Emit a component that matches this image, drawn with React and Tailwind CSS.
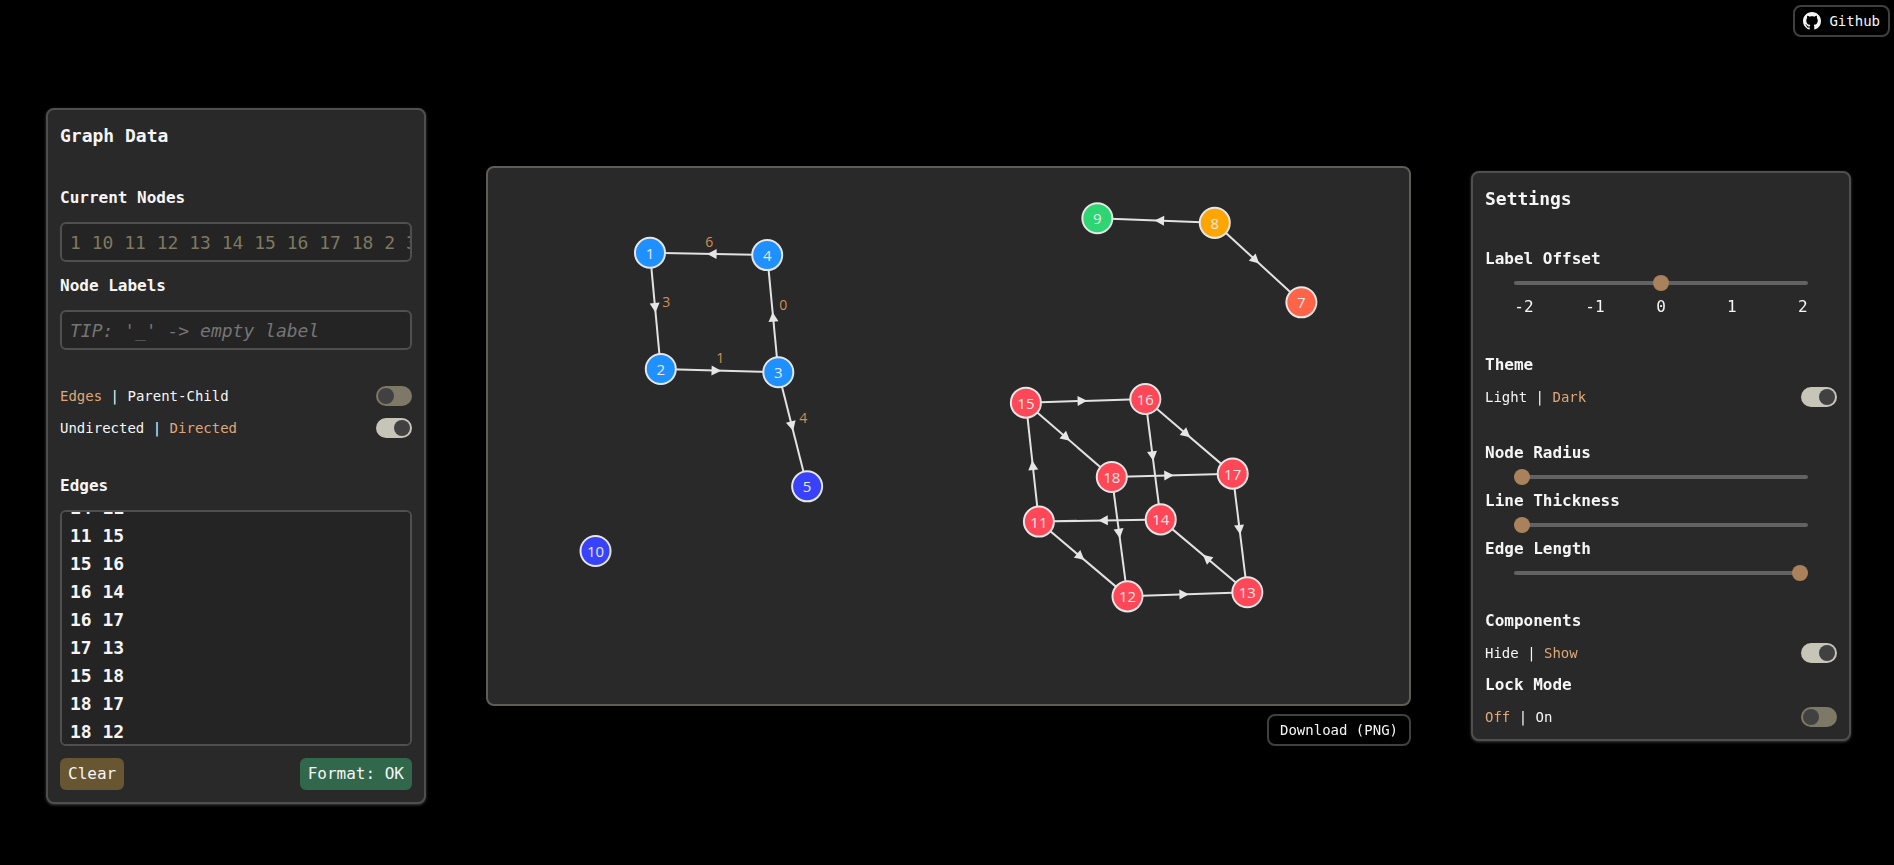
import { useEffect, useRef, useState } from "react";

const NODES = [
  { id: "1", x: 650.8, y: 252.7, fill: "#1e90ff" },
  { id: "4", x: 767.9, y: 255, fill: "#1e90ff" },
  { id: "2", x: 661.6, y: 368.8, fill: "#1e90ff" },
  { id: "3", x: 779, y: 372, fill: "#1e90ff" },
  { id: "5", x: 807.8, y: 486, fill: "#3742fa" },
  { id: "10", x: 596.4, y: 550.6, fill: "#3742fa" },
  { id: "9", x: 1097.7, y: 218.2, fill: "#2ed573" },
  { id: "8", x: 1215, y: 222.8, fill: "#ffa502" },
  { id: "7", x: 1301.5, y: 302.2, fill: "#ff6348" },
  { id: "15", x: 1026.3, y: 402.4, fill: "#ff4757" },
  { id: "16", x: 1145.6, y: 398.8, fill: "#ff4757" },
  { id: "18", x: 1112.1, y: 476.7, fill: "#ff4757" },
  { id: "17", x: 1232.9, y: 473.3, fill: "#ff4757" },
  { id: "11", x: 1039.3, y: 521.2, fill: "#ff4757" },
  { id: "14", x: 1161, y: 519, fill: "#ff4757" },
  { id: "12", x: 1127.8, y: 595.9, fill: "#ff4757" },
  { id: "13", x: 1247.5, y: 591.8, fill: "#ff4757" },
];

const LINKS = [
  { from: "1", to: "2", label: "3", lx: 667, ly: 302 },
  { from: "2", to: "3", label: "1", lx: 721, ly: 358 },
  { from: "3", to: "4", label: "0", lx: 784, ly: 305 },
  { from: "4", to: "1", label: "6", lx: 710, ly: 242 },
  { from: "3", to: "5", label: "4", lx: 804, ly: 418 },
  { from: "8", to: "7" },
  { from: "8", to: "9" },
  { from: "11", to: "12" },
  { from: "12", to: "13" },
  { from: "13", to: "14" },
  { from: "14", to: "11" },
  { from: "11", to: "15" },
  { from: "15", to: "16" },
  { from: "16", to: "14" },
  { from: "16", to: "17" },
  { from: "17", to: "13" },
  { from: "15", to: "18" },
  { from: "18", to: "17" },
  { from: "18", to: "12" },
];

const EDGE_TEXT = [
  "1 2 3", "2 3 1", "3 4 0", "4 1 6", "3 5 4", "8 7", "8 9", "10",
  "11 12", "12 13", "13 14", "14 11", "11 15", "15 16", "16 14",
  "16 17", "17 13", "15 18", "18 17", "18 12",
].join("\n");

const byId = Object.fromEntries(NODES.map((n) => [n.id, n]));

function Graph() {
  return (
    <svg viewBox="489 168 920 536" className="block h-auto w-full" role="img" aria-label="Graph">
      {LINKS.map(({ from, to }) => {
        const a = byId[from];
        const b = byId[to];
        const angle = (Math.atan2(b.y - a.y, b.x - a.x) * 180) / Math.PI;
        return (
          <g key={`${from}-${to}`}>
            <line x1={a.x} y1={a.y} x2={b.x} y2={b.y} stroke="#e2e2e2" strokeWidth="2" />
            <path
              d="M1.5 0 L-8 -5 L-8 5 Z"
              fill="#e6e6e6"
              transform={`translate(${(a.x + b.x) / 2} ${(a.y + b.y) / 2}) rotate(${angle})`}
            />
          </g>
        );
      })}
      {LINKS.filter((l) => l.label).map((l) => (
        <text
          key={`${l.from}-${l.to}-label`}
          x={l.lx}
          y={l.ly + 5}
          textAnchor="middle"
          fill="#cf9052"
          className="font-['Open_Sans',sans-serif] text-[14px]"
        >
          {l.label}
        </text>
      ))}
      {NODES.map((n) => (
        <g key={n.id}>
          <circle cx={n.x} cy={n.y} r="15" fill={n.fill} stroke="#e6e6e6" strokeWidth="2" />
          <text
            x={n.x}
            y={n.y + 6}
            textAnchor="middle"
            fill="#e8e8e8"
            className="font-['Open_Sans',sans-serif] text-[15px] font-medium"
          >
            {n.id}
          </text>
        </g>
      ))}
    </svg>
  );
}

function Panel({ title, children }) {
  return (
    <section className="w-[380px] shrink-0 rounded-lg border-2 border-[#4f4f4f] bg-[#292929] p-3 shadow-[0_1px_3px_#404040]">
      <h2 className="text-lg/7 font-bold">{title}</h2>
      {children}
    </section>
  );
}

function Toggle({ left, right, defaultOn, label }) {
  const [on, setOn] = useState(defaultOn);
  return (
    <label className="flex h-5 items-center justify-between text-sm/5">
      <span className="whitespace-pre">
        <span className={on ? "" : "text-[#dfa778]"}>{left}</span>
        {" | "}
        <span className={on ? "text-[#dfa778]" : ""}>{right}</span>
      </span>
      <input
        type="checkbox"
        role="switch"
        aria-label={label}
        checked={on}
        onChange={(e) => setOn(e.target.checked)}
        className="flex h-5 w-9 cursor-pointer appearance-none items-center rounded-full bg-[#7e7966] px-0.5 before:size-4 before:rounded-full before:bg-[#414141] checked:justify-end checked:bg-[#c7c4b8]"
      />
    </label>
  );
}

function Slider({ id, label, ticks, ...range }) {
  return (
    <div>
      <label htmlFor={id} className="block text-base/6 font-bold">
        {label}
      </label>
      <div className="mx-auto w-10/12">
        <div className="flex h-6 items-center">
          <input
            id={id}
            type="range"
            {...range}
            className="h-4 w-full cursor-pointer appearance-none bg-transparent [&::-webkit-slider-runnable-track]:h-1 [&::-webkit-slider-runnable-track]:rounded-sm [&::-webkit-slider-runnable-track]:bg-[#626262] [&::-webkit-slider-thumb]:-mt-1.5 [&::-webkit-slider-thumb]:size-4 [&::-webkit-slider-thumb]:appearance-none [&::-webkit-slider-thumb]:rounded-full [&::-webkit-slider-thumb]:bg-[#a9825b]"
          />
        </div>
        {ticks && (
          <div className="flex justify-between text-base/6">
            {ticks.map((t) => (
              <span key={t} className="w-[1ch] whitespace-nowrap">{t}</span>
            ))}
          </div>
        )}
      </div>
    </div>
  );
}

const field =
  "block w-full rounded-md border-2 border-[#4f4f4f] bg-[#242424] pl-2 text-lg/7 outline-none";

export default function App() {
  const edges = useRef(null);

  useEffect(() => {
    edges.current.scrollTop = 330;
  }, []);

  return (
    <div className="flex min-h-screen flex-col bg-black font-['DejaVu_Sans_Mono',monospace] text-[#f5f5f5]">
      <header className="flex justify-end px-1 py-[5px]">
        <a
          href="https://github.com"
          className="flex h-8 items-center gap-2 rounded-lg border-2 border-[#404040] px-2 text-sm/5"
        >
          <svg viewBox="0 0 16 16" className="size-[18px]" fill="currentColor" aria-hidden="true">
            <path d="M8 0C3.58 0 0 3.58 0 8c0 3.54 2.29 6.53 5.47 7.59.4.07.55-.17.55-.38 0-.19-.01-.82-.01-1.49-2.01.37-2.53-.49-2.69-.94-.09-.23-.48-.94-.82-1.13-.28-.15-.68-.52-.01-.53.63-.01 1.08.58 1.23.82.72 1.21 1.87.87 2.33.66.07-.52.28-.87.51-1.07-1.78-.2-3.64-.89-3.64-3.95 0-.87.31-1.59.82-2.15-.08-.2-.36-1.02.08-2.12 0 0 .67-.21 2.2.82.64-.18 1.32-.27 2-.27s1.36.09 2 .27c1.53-1.04 2.2-.82 2.2-.82.44 1.1.16 1.92.08 2.12.51.56.82 1.27.82 2.15 0 3.07-1.87 3.75-3.65 3.95.29.25.54.73.54 1.48 0 1.07-.01 1.93-.01 2.2 0 .21.15.46.55.38A8.01 8.01 0 0 0 16 8c0-4.42-3.58-8-8-8Z" />
          </svg>
          Github
        </a>
      </header>

      <main className="flex flex-1 items-center gap-[60px] pt-[5px] pr-[43px] pl-[46px]">
        <Panel title="Graph Data">
          <div className="mt-9 flex flex-col gap-3">
            <label htmlFor="nodes" className="text-base/6 font-bold">Current Nodes</label>
            <input
              id="nodes"
              readOnly
              value="1 10 11 12 13 14 15 16 17 18 2 3 4 5 7 8 9"
              className={`${field} h-10 text-[#7f795f]`}
            />
            <label htmlFor="labels" className="text-base/6 font-bold">Node Labels</label>
            <input
              id="labels"
              placeholder="TIP: '_' -> empty label"
              className={`${field} h-10 placeholder:italic placeholder:text-[#757575]`}
            />
          </div>
          <div className="mt-9 flex flex-col gap-3">
            <Toggle left="Edges" right="Parent-Child" label="Input format" defaultOn={false} />
            <Toggle left="Undirected" right="Directed" label="Edge direction" defaultOn />
          </div>
          <div className="mt-9 flex flex-col gap-3">
            <label htmlFor="edges" className="text-base/6 font-bold">Edges</label>
            <textarea
              id="edges"
              ref={edges}
              defaultValue={EDGE_TEXT}
              spellCheck={false}
              className={`${field} h-[236px] resize-none py-1 font-bold [scrollbar-width:none]`}
            />
            <div className="flex justify-between text-base/6">
              <button type="button" className="h-8 rounded-md bg-[#685531] px-2">Clear</button>
              <button type="button" className="h-8 rounded-md bg-[#31684c] px-2">Format: OK</button>
            </div>
          </div>
        </Panel>

        <div className="flex min-w-0 flex-1 flex-col items-end gap-2">
          <div className="w-full rounded-lg border-2 border-[#605c56] bg-[#292929]">
            <Graph />
          </div>
          <button type="button" className="h-8 rounded-lg border-2 border-[#404040] px-[11px] text-sm/5">
            Download (PNG)
          </button>
        </div>

        <Panel title="Settings">
          <div className="mt-[34px]">
            <Slider
              id="offset"
              label="Label Offset"
              min={-2}
              max={2}
              defaultValue={0}
              ticks={["-2", "-1", "0", "1", "2"]}
            />
          </div>
          <div className="mt-[34px] flex flex-col gap-2.5">
            <h3 className="text-base/6 font-bold">Theme</h3>
            <Toggle left="Light" right="Dark" label="Theme" defaultOn />
          </div>
          <div className="mt-[34px]">
            <Slider id="radius" label="Node Radius" min={16} max={40} defaultValue={16} />
            <Slider id="thickness" label="Line Thickness" min={1} max={10} defaultValue={1} />
            <Slider id="length" label="Edge Length" min={10} max={120} defaultValue={120} />
          </div>
          <div className="mt-6 flex flex-col gap-2.5">
            <h3 className="text-base/6 font-bold">Components</h3>
            <Toggle left="Hide" right="Show" label="Components" defaultOn />
            <h3 className="text-base/6 font-bold">Lock Mode</h3>
            <Toggle left="Off" right="On" label="Lock Mode" defaultOn={false} />
          </div>
        </Panel>
      </main>
    </div>
  );
}
